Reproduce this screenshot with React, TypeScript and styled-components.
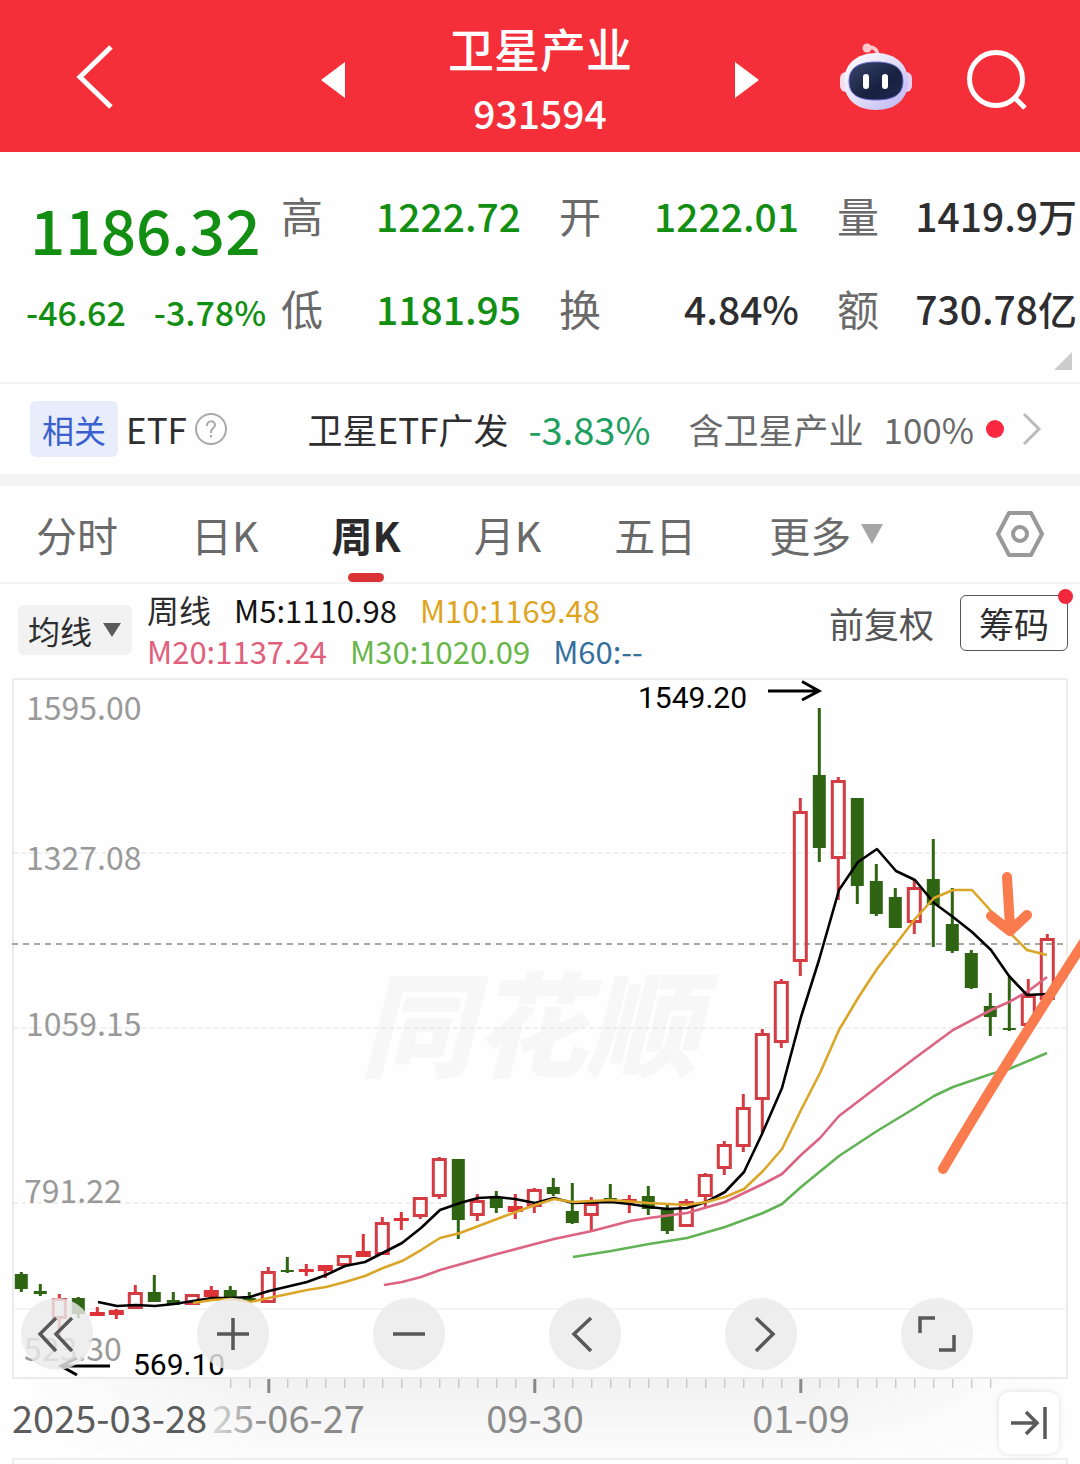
import React from 'react';
import styled, { createGlobalStyle } from 'styled-components';

const RED = '#f52f39';
const GREEN = '#128f12';
const CJK = '"Noto Sans CJK SC", sans-serif';

const GlobalStyle = createGlobalStyle`
  * { box-sizing: border-box; }
  body { margin: 0; background: #fefefe; font-family: ${CJK}; color: #2e2e30; }
  button { border: 0; padding: 0; margin: 0; background: none; font: inherit; color: inherit; cursor: pointer; }
  svg { display: block; }
`;

const Page = styled.main`
  display: flex;
  flex-direction: column;
  overflow: hidden;
`;

/* ---------- title bar ---------- */

const TitleBar = styled.header`
  display: flex;
  align-items: center;
  justify-content: space-between;
  height: 152px;
  padding: 8px 52px 0 74px;
  background: ${RED};
  color: #fff;
`;

const TitleSwitch = styled.div`
  display: flex;
  align-items: center;
  justify-content: space-between;
  width: 438px;
  margin-left: 126px;
`;

const TitleText = styled.div`
  text-align: center;
`;

const Name = styled.h1`
  margin: 0;
  font-size: 46px;
  line-height: 64px;
  font-weight: 500;
`;

const Code = styled.div`
  font-size: 39px;
  line-height: 66px;
  font-weight: 500;
`;

const TitleActions = styled.div`
  display: flex;
  align-items: center;
  gap: 52px;
`;

const IconButton = styled.button`
  display: grid;
  place-items: center;
`;

/* ---------- quote ---------- */

const Quote = styled.section`
  position: relative;
  display: flex;
  height: 232px;
  padding: 16px 3px 0 0;
  border-bottom: 2px solid #f3f3f3;
`;

const PriceBlock = styled.div`
  flex: none;
  width: 281px;
  padding: 12px 0 0 26px;
  color: ${GREEN};
  font-weight: 500;
`;

const Price = styled.div`
  font-size: 62px;
  line-height: 96px;
  padding-left: 4px;
`;

const Change = styled.div`
  display: flex;
  gap: 28px;
  font-size: 34px;
  line-height: 72px;
`;

const Stats = styled.dl`
  flex: 1;
  display: grid;
  grid-template-columns: repeat(3, 1fr);
  grid-auto-rows: 93px;
  column-gap: 38px;
  margin: 0;
`;

const Stat = styled.div`
  display: flex;
  align-items: center;
  justify-content: space-between;
  white-space: nowrap;
`;

const StatLabel = styled.dt`
  font-size: 42px;
  color: #6a6a6a;
`;

const StatValue = styled.dd<{ $down?: boolean }>`
  margin: 0;
  font-size: 39px;
  font-weight: 500;
  color: ${(p) => (p.$down ? GREEN : '#2e2e30')};
`;

const Corner = styled.span`
  position: absolute;
  right: 8px;
  bottom: 12px;
  border-style: solid;
  border-width: 0 0 18px 18px;
  border-color: transparent transparent #ccc transparent;
`;

/* ---------- related fund ---------- */

const Related = styled.section`
  display: flex;
  align-items: center;
  height: 102px;
  padding: 0 38px 0 30px;
  border-bottom: 12px solid #f4f4f5;
  font-size: 35px;
  line-height: 56px;
  white-space: nowrap;
`;

const Tag = styled.span`
  padding: 0 12px;
  margin-right: 8px;
  border-radius: 6px;
  background: #e8edfc;
  color: #3a60d0;
  font-size: 32px;
`;

const Kind = styled.span`
  margin-right: 8px;
`;

const Fund = styled.a`
  flex: 1;
  display: flex;
  align-items: center;
  justify-content: flex-end;
  color: inherit;
  text-decoration: none;
`;

const FundChange = styled.span`
  margin: 0 38px 0 20px;
  color: #1fa060;
  font-size: 38px;
`;

const Muted = styled.span`
  color: #6a6a6a;
  margin-right: 20px;
`;

const Dot = styled.i`
  width: 18px;
  height: 18px;
  margin: 0 18px 0 -8px;
  border-radius: 50%;
  background: #fa2840;
`;

/* ---------- period tabs ---------- */

const Tabs = styled.nav`
  display: flex;
  align-items: center;
  gap: 73px;
  height: 98px;
  padding: 0 36px;
  border-bottom: 2px solid #f3f3f3;
`;

const Tab = styled.button<{ $active?: boolean }>`
  position: relative;
  display: flex;
  align-items: center;
  gap: 10px;
  height: 96px;
  font-size: 41px;
  white-space: nowrap;
  font-weight: ${(p) => (p.$active ? 700 : 400)};
  color: ${(p) => (p.$active ? '#2a2a2c' : '#6a6a6a')};
  &::after {
    content: ${(p) => (p.$active ? '""' : 'none')};
    position: absolute;
    left: 50%;
    bottom: 0;
    width: 36px;
    height: 9px;
    margin-left: -18px;
    border-radius: 5px;
    background: #da3336;
  }
`;

const SettingsButton = styled(IconButton)`
  margin-left: auto;
`;

/* ---------- moving averages ---------- */

const Averages = styled.section`
  display: flex;
  align-items: center;
  height: 92px;
  padding: 0 12px 0 18px;
`;

const AverageButton = styled.button`
  display: flex;
  align-items: center;
  gap: 11px;
  height: 50px;
  padding: 0 11px 0 10px;
  margin-right: 15px;
  border-radius: 6px;
  background: #f2f2f2;
  font-size: 32px;
`;

const Legend = styled.div`
  flex: 1;
`;

const LegendRow = styled.div`
  display: flex;
  gap: 23px;
  font-size: 31px;
  line-height: 41px;
  white-space: nowrap;
`;

const LegendItem = styled.span<{ $color: string }>`
  color: ${(p) => p.$color};
`;

const LegendTitle = styled.span`
  font-size: 32px;
`;

const Tools = styled.div`
  display: flex;
  align-items: center;
  align-self: flex-start;
  gap: 26px;
  padding-top: 11px;
  font-size: 35px;
  line-height: 52px;
`;

const Adjust = styled.button`
  color: #555;
`;

const Chips = styled.button`
  position: relative;
  width: 108px;
  height: 56px;
  border: 1px solid #555;
  border-radius: 6px;
  &::after {
    content: '';
    position: absolute;
    top: -7px;
    right: -6px;
    width: 15px;
    height: 15px;
    border-radius: 50%;
    background: #f0283c;
  }
`;

/* ---------- chart ---------- */

const ChartBox = styled.section`
  position: relative;
`;

const Drawing = styled.svg`
  width: 100%;
  height: auto;
  text {
    font-family: ${CJK};
  }
`;

const ExtremeLabel = styled.text`
  && {
    font-family: Roboto, sans-serif;
  }
`;

const Controls = styled.div`
  position: absolute;
  left: 21px;
  right: 107px;
  bottom: 94px;
  display: flex;
  justify-content: space-between;
`;

const RoundButton = styled(IconButton)`
  width: 72px;
  height: 72px;
  border-radius: 50%;
  background: rgba(234, 234, 234, 0.82);
`;

const LatestButton = styled(IconButton)`
  position: absolute;
  right: 21px;
  bottom: 10px;
  width: 60px;
  height: 62px;
  border-radius: 10px;
  background: #fff;
  box-shadow: 0 0 6px rgba(0, 0, 0, 0.12);
`;

type CandleKind = 'g' | 'r' | 's';
/* kind (g falling, r rising hollow, s rising solid), high, low, body top, body bottom */
type Candle = [CandleKind, number, number, number, number];

const candles: Candle[] = [
  ['g', 1272, 1292, 1274, 1289], ['g', 1284, 1296, 1291, 1294], ['r', 1294, 1337, 1298, 1319],
  ['g', 1297, 1318, 1298, 1314], ['s', 1307, 1316, 1312, 1316], ['s', 1309, 1319, 1310, 1315],
  ['r', 1285, 1309, 1292, 1309], ['g', 1275, 1302, 1292, 1302], ['g', 1292, 1305, 1300, 1305],
  ['r', 1294, 1305, 1294, 1305], ['s', 1286, 1298, 1290, 1297], ['g', 1286, 1298, 1290, 1298],
  ['g', 1292, 1302, 1298, 1302], ['r', 1267, 1303, 1271, 1303], ['g', 1257, 1273, 1270, 1272],
  ['s', 1264, 1276, 1269, 1272], ['s', 1265, 1278, 1265, 1271], ['r', 1255, 1266, 1255, 1266],
  ['s', 1234, 1257, 1251, 1257], ['r', 1217, 1255, 1222, 1255], ['s', 1212, 1230, 1218, 1221],
  ['r', 1197, 1219, 1197, 1217], ['r', 1157, 1199, 1158, 1197], ['g', 1159, 1239, 1159, 1220],
  ['r', 1194, 1221, 1200, 1216], ['g', 1191, 1213, 1198, 1208], ['s', 1194, 1219, 1206, 1212],
  ['r', 1188, 1213, 1189, 1207], ['g', 1178, 1196, 1187, 1194], ['g', 1183, 1224, 1211, 1223],
  ['r', 1197, 1231, 1203, 1216], ['g', 1184, 1201, 1198, 1201], ['s', 1195, 1213, 1199, 1203],
  ['g', 1186, 1215, 1196, 1209], ['g', 1203, 1234, 1208, 1231], ['r', 1199, 1227, 1201, 1227],
  ['r', 1173, 1207, 1174, 1197], ['r', 1141, 1175, 1144, 1169], ['r', 1094, 1152, 1107, 1147],
  ['r', 1029, 1133, 1033, 1100], ['r', 979, 1048, 981, 1043], ['r', 798, 976, 811, 962],
  ['g', 708, 862, 775, 848], ['r', 777, 900, 780, 859], ['g', 798, 904, 798, 886],
  ['g', 864, 916, 881, 914], ['g', 888, 928, 897, 928], ['r', 880, 934, 887, 923],
  ['g', 839, 947, 879, 905], ['g', 888, 953, 924, 951], ['g', 950, 989, 953, 988],
  ['g', 993, 1036, 1006, 1017], ['g', 977, 1031, 1028, 1030], ['r', 979, 1026, 995, 1026],
  ['r', 934, 1000, 938, 1000],
];

const averages = [
  {
    color: '#62b256',
    points:
      '573,1257 611,1251 649,1244 687,1238 725,1227 763,1213 782,1204 801,1187 839,1156 877,1131 915,1108 934,1096 953,1087 991,1074 1009,1069 1047,1053',
  },
  {
    color: '#dc6482',
    points:
      '384,1285 402,1282 421,1277 440,1270 497,1254 554,1239 592,1231 630,1221 649,1218 687,1213 725,1202 763,1184 782,1174 801,1155 820,1138 839,1116 877,1087 915,1058 953,1030 991,1010 1009,1002 1027,992 1047,977',
  },
  {
    color: '#000',
    points:
      '98,1302 117,1306 136,1305 155,1306 174,1304 193,1301 212,1298 231,1298 250,1297 269,1291 307,1282 326,1275 345,1266 365,1262 402,1243 421,1228 440,1210 460,1203 478,1198 497,1197 515,1199 535,1203 554,1198 573,1203 611,1202 630,1204 649,1207 668,1209 687,1208 706,1202 725,1192 744,1172 762,1134 782,1088 801,1017 819,960 839,890 858,862 877,849 896,871 915,880 934,903 953,917 972,932 991,950 1009,976 1027,995 1047,994',
  },
  {
    color: '#dba628',
    points:
      '193,1303 212,1300 231,1299 250,1302 269,1298 288,1294 307,1290 326,1287 345,1282 365,1276 383,1268 402,1261 421,1250 440,1238 460,1233 497,1219 535,1205 554,1199 573,1202 611,1200 649,1203 687,1205 706,1202 725,1197 744,1189 763,1171 782,1149 801,1110 820,1073 839,1030 858,998 877,969 896,944 915,919 934,898 953,890 972,890 991,911 1009,932 1027,950 1047,955',
  },
];

const priceLabels: [string, number, number][] = [
  ['1595.00', 26, 720],
  ['1327.08', 26, 870],
  ['1059.15', 26, 1036],
  ['791.22', 24, 1203],
  ['523.30', 24, 1361],
];

const centre = (i: number) => 21.3 + 19 * i;

function CandleShape({ data, index }: { data: Candle; index: number }) {
  const [kind, high, low, top, bottom] = data;
  const x = centre(index);
  if (kind === 'r') {
    return (
      <g stroke="#d23c42" strokeWidth="3" fill="none">
        <path d={`M${x} ${high}V${top}M${x} ${bottom}V${low}`} />
        <rect x={x - 6} y={top + 1.5} width="12" height={bottom - top - 3} />
      </g>
    );
  }
  const color = kind === 'g' ? '#2f6512' : '#dc3338';
  const half = kind === 'g' ? 6.5 : 7.5;
  return (
    <g fill={color}>
      <rect x={x - 1.5} y={high} width="3" height={low - high} />
      <rect x={x - half} y={top} width={half * 2} height={bottom - top} />
    </g>
  );
}

function Chart() {
  const ticks = Array.from({ length: 41 }, (_, i) => i + 11);
  return (
    <Drawing viewBox="0 676 1080 788" role="img" aria-label="周K">
      <defs>
        <linearGradient id="axis" x1="0" y1="0" x2="0" y2="1">
          <stop offset="0" stopColor="#f1f1f1" />
          <stop offset="1" stopColor="#fcfcfc" />
        </linearGradient>
        <linearGradient id="edges" x1="0" y1="0" x2="1" y2="0">
          <stop offset="0" stopColor="#fefefe" />
          <stop offset="0.25" stopColor="#fefefe" stopOpacity="0" />
          <stop offset="0.75" stopColor="#fefefe" stopOpacity="0" />
          <stop offset="1" stopColor="#fefefe" />
        </linearGradient>
        <linearGradient id="dateFade" gradientUnits="userSpaceOnUse" x1="205" y1="0" x2="265" y2="0">
          <stop offset="0" stopColor="#8a8a8a" stopOpacity="0" />
          <stop offset="0.05" stopColor="#8a8a8a" stopOpacity="0.2" />
          <stop offset="1" stopColor="#8a8a8a" />
        </linearGradient>
      </defs>

      <text x="360" y="1068" fontSize="113" fontWeight="900" fontStyle="italic" fill="#f7f7f7">
        同花顺
      </text>

      <rect x="13" y="1379" width="1054" height="79" fill="url(#axis)" />
      <rect x="13" y="1379" width="1054" height="79" fill="url(#edges)" />
      <g fill="none" stroke="#ebebeb" strokeWidth="2">
        <path d="M13 1378V679H1067V1378Z" />
        <path d="M13 1464V1459H1067V1464" stroke="#eeeeee" />
        <path d="M13 1309H1067" stroke="#f4f4f4" />
      </g>
      <path d="M13 853H1067M13 1028H1067M13 1203H1067" stroke="#e2e2e2" strokeDasharray="5 3" />
      <path d="M12 944H1067" stroke="#a5a99a" strokeWidth="2" strokeDasharray="6 5" />

      <g fill="#999" fontSize="32">
        {priceLabels.map(([label, x, y]) => (
          <text key={label} x={x} y={y}>{label}</text>
        ))}
      </g>

      {candles.map((c, i) => (
        <CandleShape key={i} data={c} index={i} />
      ))}
      {averages.map((a) => (
        <polyline key={a.color} points={a.points} fill="none" stroke={a.color} strokeWidth="2.6" strokeLinejoin="round" />
      ))}

      <g fill="none" stroke="#000" strokeWidth="3">
        <path d="M768 691H819M802 681.5L819 691L802 700" />
        <path d="M110 1366H61M77 1358L61 1366L77 1375" />
      </g>
      <g fill="#000" fontSize="30">
        <ExtremeLabel x="638" y="708">1549.20</ExtremeLabel>
        <ExtremeLabel x="133" y="1375">569.10</ExtremeLabel>
      </g>

      <g fill="none" stroke="#f97b4e" strokeWidth="10" strokeLinecap="round" strokeLinejoin="round">
        <path d="M943 1169Q990 1088 1084 942" />
        <path d="M1007 877L1010 926M991 916L1010 931L1027 915" />
      </g>

      {ticks.map((i) =>
        i % 14 === 13 ? (
          <rect key={i} x={centre(i) - 1} y="1379" width="3" height="14" fill="#888" />
        ) : (
          <rect key={i} x={centre(i)} y="1379" width="1" height="9" fill="#b5b5b5" />
        ),
      )}

      <g fontSize="38" fill="#8a8a8a">
        <text x="12" y="1433" fill="#5c5c5c">2025-03-28</text>
        <text x="212" y="1433" fill="url(#dateFade)">25-06-27</text>
        <text x="535" y="1433" textAnchor="middle">09-30</text>
        <text x="801" y="1433" textAnchor="middle">01-09</text>
      </g>
    </Drawing>
  );
}

/* ---------- icons ---------- */

function Robot() {
  return (
    <svg width="74" height="74" viewBox="1 0 74 74">
      <defs>
        <linearGradient id="shell" x1="0" y1="0" x2="1" y2="1">
          <stop offset="0" stopColor="#fff" />
          <stop offset="0.5" stopColor="#e3defa" />
          <stop offset="1" stopColor="#b9b3f2" />
        </linearGradient>
        <linearGradient id="visor" x1="0" y1="0" x2="1" y2="1">
          <stop offset="0" stopColor="#39456b" />
          <stop offset="0.6" stopColor="#17203f" />
          <stop offset="1" stopColor="#232c50" />
        </linearGradient>
      </defs>
      <path d="M28 5C34 3 38 6 39 12" fill="none" stroke="#ffc9cf" strokeWidth="3.5" />
      <circle cx="28" cy="5" r="4.5" fill="#ffc9cf" />
      <rect x="1" y="29" width="12" height="20" rx="6" fill="#f6dcec" />
      <rect x="61" y="29" width="12" height="20" rx="6" fill="#e3cdf0" />
      <path d="M37 10C57 10 69 22 69 38C69 56 57 67 37 67C17 67 5 56 5 38C5 22 17 10 37 10Z" fill="url(#shell)" />
      <path d="M37 19C56 19 64 26 64 38C64 50 57 57 37 57C17 57 10 50 10 38C10 26 18 19 37 19Z" fill="url(#visor)" stroke="#6c6bd0" strokeWidth="1" />
      <rect x="24" y="31" width="6" height="15" rx="3" fill="#fff" />
      <rect x="43" y="31" width="6" height="15" rx="3" fill="#fff" />
    </svg>
  );
}

function Stroke({ d }: { d: string }) {
  return (
    <svg width="40" height="40" viewBox="0 0 40 40" fill="none" stroke="#585858" strokeWidth="3.5">
      <path d={d} />
    </svg>
  );
}

const controls = [
  { label: '最早', d: 'M19 4L3 20L19 37M35 4L19 20L35 37' },
  { label: '放大', d: 'M4 20H36M20 4V36' },
  { label: '缩小', d: 'M4 20H36' },
  { label: '向左', d: 'M26 4L9 20L26 37' },
  { label: '向右', d: 'M15 4L32 20L15 37' },
  { label: '全屏', d: 'M3 19V4H18M22 36H37V21' },
];

export default function App() {
  return (
    <Page>
      <GlobalStyle />
      <TitleBar>
        <IconButton aria-label="返回">
          <svg width="40" height="70" viewBox="0 0 40 70" fill="none" stroke="#fff" strokeWidth="5">
            <path d="M37 2L6 32L37 62" />
          </svg>
        </IconButton>
        <TitleSwitch>
          <IconButton aria-label="上一个">
            <svg width="24" height="36" viewBox="0 0 24 36" fill="#fff"><path d="M0 18L24 0V36Z" /></svg>
          </IconButton>
          <TitleText>
            <Name>卫星产业</Name>
            <Code>931594</Code>
          </TitleText>
          <IconButton aria-label="下一个">
            <svg width="24" height="36" viewBox="0 0 24 36" fill="#fff"><path d="M24 18L0 0V36Z" /></svg>
          </IconButton>
        </TitleSwitch>
        <TitleActions>
          <IconButton aria-label="助手"><Robot /></IconButton>
          <IconButton aria-label="搜索">
            <svg width="62" height="62" viewBox="0 0 62 62" fill="none" stroke="#fff" strokeWidth="5">
              <circle cx="30" cy="30" r="26.5" />
              <path d="M49 49L59 59" />
            </svg>
          </IconButton>
        </TitleActions>
      </TitleBar>

      <Quote>
        <PriceBlock>
          <Price>1186.32</Price>
          <Change><span>-46.62</span><span>-3.78%</span></Change>
        </PriceBlock>
        <Stats>
          <Stat><StatLabel>高</StatLabel><StatValue $down>1222.72</StatValue></Stat>
          <Stat><StatLabel>开</StatLabel><StatValue $down>1222.01</StatValue></Stat>
          <Stat><StatLabel>量</StatLabel><StatValue>1419.9万</StatValue></Stat>
          <Stat><StatLabel>低</StatLabel><StatValue $down>1181.95</StatValue></Stat>
          <Stat><StatLabel>换</StatLabel><StatValue>4.84%</StatValue></Stat>
          <Stat><StatLabel>额</StatLabel><StatValue>730.78亿</StatValue></Stat>
        </Stats>
        <Corner />
      </Quote>

      <Related>
        <Tag>相关</Tag>
        <Kind>ETF</Kind>
        <IconButton aria-label="说明">
          <svg width="32" height="32" viewBox="0 0 32 32" fill="none" stroke="#a8a8a8" strokeWidth="2">
            <circle cx="16" cy="16" r="15" />
            <path d="M12 13C12 7 20 7 20 12C20 15 16 15 16 19V20M16 22V24.5" />
          </svg>
        </IconButton>
        <Fund href="#etf">
          <span>卫星ETF广发</span>
          <FundChange>-3.83%</FundChange>
          <Muted>含卫星产业</Muted>
          <Muted>100%</Muted>
          <Dot />
          <svg width="20" height="34" viewBox="0 0 20 34" fill="none" stroke="#bbb" strokeWidth="3">
            <path d="M2 2L17 17L2 32" />
          </svg>
        </Fund>
      </Related>

      <Tabs>
        <Tab>分时</Tab>
        <Tab>日K</Tab>
        <Tab $active>周K</Tab>
        <Tab>月K</Tab>
        <Tab>五日</Tab>
        <Tab>
          更多
          <svg width="22" height="20" viewBox="0 0 22 20" fill="#a5a5a5"><path d="M0 0H22L11 20Z" /></svg>
        </Tab>
        <SettingsButton aria-label="设置">
          <svg width="48" height="48" viewBox="0 0 48 48" fill="none" stroke="#999" strokeWidth="4" strokeLinejoin="round">
            <path d="M13 3H35L46 24L35 45H13L2 24Z" />
            <circle cx="24" cy="24" r="7" />
          </svg>
        </SettingsButton>
      </Tabs>

      <Averages>
        <AverageButton>
          均线
          <svg width="18" height="14" viewBox="0 0 18 14" fill="#5c5c5c"><path d="M0 0H18L9 14Z" /></svg>
        </AverageButton>
        <Legend>
          <LegendRow>
            <LegendTitle>周线</LegendTitle>
            <LegendItem $color="#111">M5:1110.98</LegendItem>
            <LegendItem $color="#dea51f">M10:1169.48</LegendItem>
          </LegendRow>
          <LegendRow>
            <LegendItem $color="#e0607c">M20:1137.24</LegendItem>
            <LegendItem $color="#68b649">M30:1020.09</LegendItem>
            <LegendItem $color="#356f9e">M60:--</LegendItem>
          </LegendRow>
        </Legend>
        <Tools>
          <Adjust>前复权</Adjust>
          <Chips>筹码</Chips>
        </Tools>
      </Averages>

      <ChartBox>
        <Chart />
        <Controls>
          {controls.map((c) => (
            <RoundButton key={c.label} aria-label={c.label}><Stroke d={c.d} /></RoundButton>
          ))}
        </Controls>
        <LatestButton aria-label="最新">
          <svg width="36" height="36" viewBox="0 0 36 36" fill="none" stroke="#5a5a5a" strokeWidth="3.5">
            <path d="M0 18H26M15 7L26 18L15 29M34 2V34" />
          </svg>
        </LatestButton>
      </ChartBox>
    </Page>
  );
}
